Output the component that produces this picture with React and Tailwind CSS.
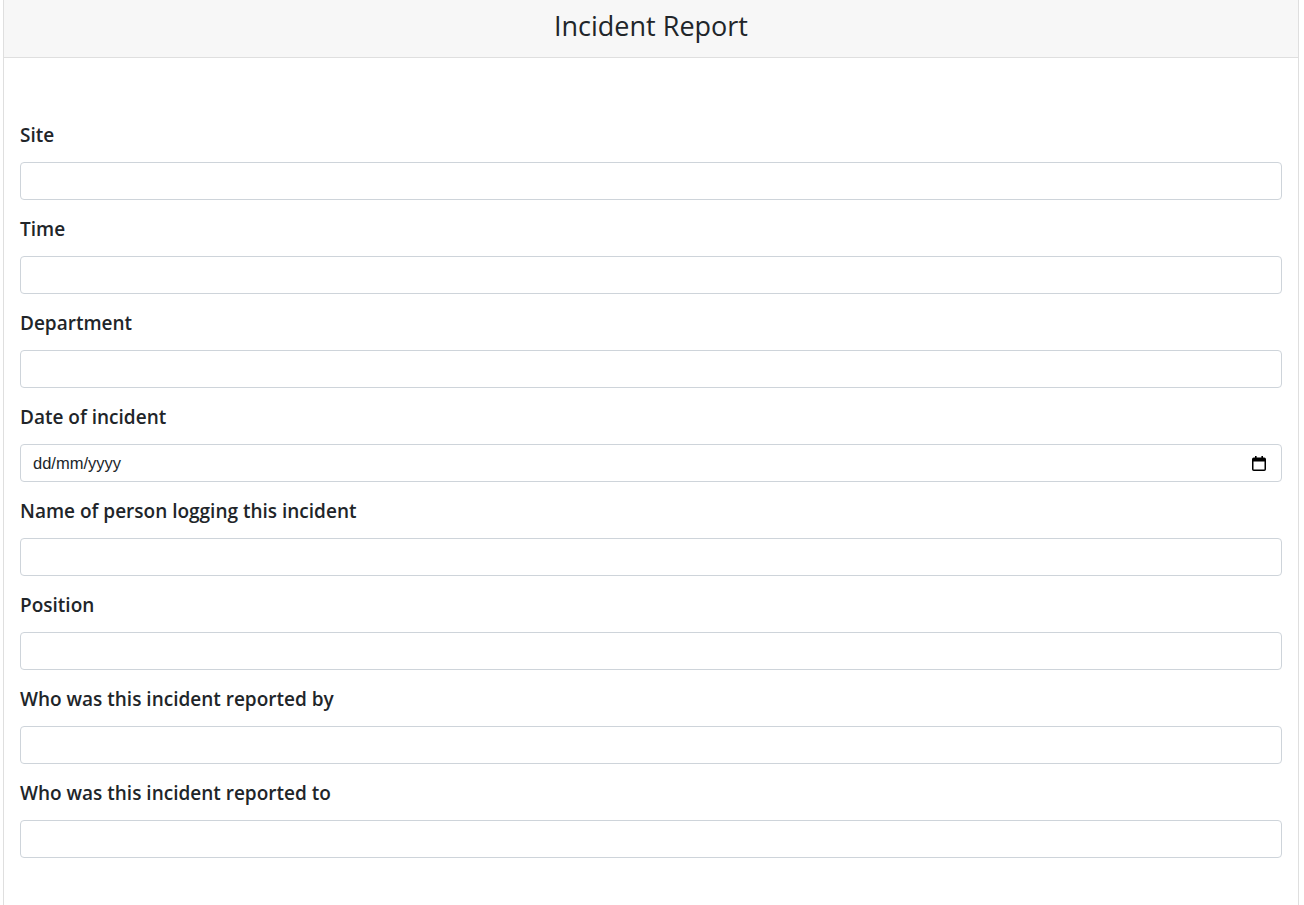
import React from 'react';

const fields = [
    { label: 'Site', type: 'text' },
    { label: 'Time', type: 'text' },
    { label: 'Department', type: 'text' },
    { label: 'Date of incident', type: 'date' },
    { label: 'Name of person logging this incident', type: 'text' },
    { label: 'Position', type: 'text' },
    { label: 'Who was this incident reported by', type: 'text' },
    { label: 'Who was this incident reported to', type: 'text' },
];

const CalendarIcon = () => (
    <svg width="14" height="15" viewBox="0 0 14 15" fill="none">
        <rect x="3" y="0" width="1.6" height="3" fill="#000" />
        <rect x="9.4" y="0" width="1.6" height="3" fill="#000" />
        <rect x="0.75" y="2.25" width="12.5" height="12" rx="1" stroke="#000" strokeWidth="1.5" />
        <rect x="1" y="2.5" width="12" height="3" fill="#000" />
    </svg>
);

const Field = ({ label, type }) => (
    <div className="mb-4">
        <label className="block text-[19px] leading-[27px] font-semibold text-[#212529] mb-[13px]">{label}</label>
        {type === 'date' ? (
            <div className="flex items-center justify-between h-[38px] w-full rounded border border-[#ced4da] bg-white pl-3 pr-[15px]">
                <span className="text-[16.5px] leading-none pt-[1px] text-[#212529] font-['Liberation_Sans',sans-serif]">dd/mm/yyyy</span>
                <CalendarIcon />
            </div>
        ) : (
            <input type="text" className="block h-[38px] w-full rounded border border-[#ced4da] bg-white px-3 outline-none" />
        )}
    </div>
);

export default function App() {
    return (
        <div className="min-h-screen bg-white font-['Open_Sans',sans-serif]">
            <div className="ml-[3px] w-[1296px] min-h-[905px] border border-b-0 border-t-0 border-[#dfdfdf]">
                <div className="h-[58px] bg-[#f7f7f7] border-b border-[#dfdfdf] flex items-center justify-center">
                    <h1 className="text-[27px] leading-none font-medium text-[#212529] pb-[7px]">Incident Report</h1>
                </div>
                <div className="px-4 pt-[64px]">
                    {fields.map(f => <Field key={f.label} {...f} />)}
                </div>
            </div>
        </div>
    );
}
